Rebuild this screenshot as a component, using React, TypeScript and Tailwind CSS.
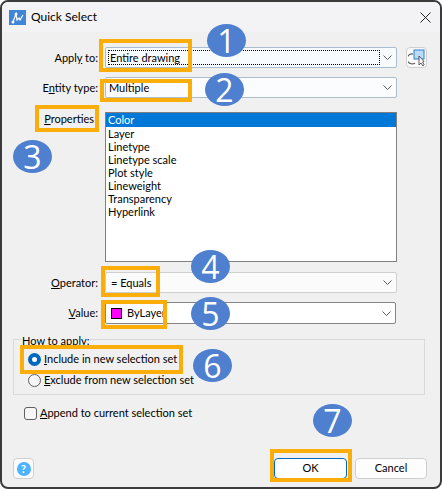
import React from "react";

const Chevron = () => (
  <svg width="9" height="5" viewBox="0 0 9 5" className="shrink-0" fill="none">
    <path d="M0.5 0.5 L4.5 4.5 L8.5 0.5" stroke="#5c5c5c" strokeWidth="1" />
  </svg>
);

const U = ({ children }: { children: React.ReactNode }) => <span className="underline underline-offset-1">{children}</span>;

const Badge = ({ n, cls }: { n: number; cls: string }) => (
  <div className={`absolute w-[39px] h-[33px] rounded-[50%] bg-[#4f7fcf] text-white flex items-center justify-center text-[32px] leading-none font-['Open_Sans',sans-serif] ${cls}`}>
    {n}
  </div>
);

const Mark = ({ cls }: { cls: string }) => <div className={`absolute border-4 border-[#fbae0a] ${cls}`} />;

const items = ["Layer", "Linetype", "Linetype scale", "Plot style", "Lineweight", "Transparency", "Hyperlink"];

export default function App() {
  return (
    <div className="relative w-[442px] h-[489px] bg-white overflow-hidden font-['Lato',sans-serif] text-[11px] text-black">
      <div className="h-full flex flex-col rounded-[8px] border-2 border-[#3b3b3b] bg-[#f0f0f0] overflow-hidden">
        <div className="h-[30px] shrink-0 bg-[#f3f3f6] flex items-center pl-[7px] pr-[9px]">
          <svg width="17" height="15" viewBox="0 0 17 15">
            <rect width="17" height="15" fill="#3f86d8" />
            <path d="M4 12 L7 4 L8 10 L10 8 L11 10 L14 5" fill="none" stroke="#fff" strokeWidth="1.2" />
            <circle cx="4" cy="12" r="1.5" fill="#fff" />
            <circle cx="7" cy="4" r="1.5" fill="#fff" />
          </svg>
          <span className="ml-[5px] text-[12px]">Quick Select</span>
          <svg width="11" height="11" viewBox="0 0 11 11" className="ml-auto">
            <path d="M0.5 0.5 L10.5 10.5 M10.5 0.5 L0.5 10.5" stroke="#222" strokeWidth="1" />
          </svg>
        </div>

        <div className="flex-1 flex flex-col pt-[15px] pl-[11px] pr-[13px] pb-[8px]">
          <div className="flex items-center h-[21px]">
            <div className="w-[85px] text-right shrink-0 pt-px">Appl<U>y</U> to:</div>
            <div className="ml-[7px] w-[292px] h-full rounded-[2px] border border-[#a9bdd2] bg-[#f8fbfe] flex items-center pl-[2px] pr-[3px]">
              <div className="h-[15px] w-[272px] border border-dotted border-black flex items-center pl-[1px] pt-px">Entire drawing</div>
              <div className="ml-auto mr-[1px] flex"><Chevron /></div>
            </div>
            <div className="ml-[9px] w-[21px] h-full rounded-[4px] border border-[#cfcfcf] bg-[#fbfbfb] flex items-center justify-center">
              <svg width="17" height="17" viewBox="0 0 17 17" fill="none">
                <rect x="6" y="1" width="10" height="9" fill="#b9dcfb" stroke="#2f7fd0" />
                <path d="M7 14 A5 5 0 1 1 5 5" stroke="#555" strokeWidth="1.1" />
                <path d="M11 7 L11 16 L13 14 L15 17 L16 15.5 L14.5 13 L16 12.5 Z" fill="#fff" stroke="#333" strokeWidth="0.8" />
              </svg>
            </div>
          </div>

          <div className="flex items-center h-[21px] mt-[9px]">
            <div className="w-[85px] text-right shrink-0 pt-px">E<U>n</U>tity type:</div>
            <div className="ml-[7px] w-[292px] h-full rounded-[2px] border border-[#abbccc] bg-[#fbfcfe] flex items-center pl-[3px] pr-[4px] justify-between">
              <span className="pt-px">Multiple</span>
              <Chevron />
            </div>
          </div>

          <div className="flex mt-[14px]">
            <div className="w-[81px] text-right shrink-0 leading-[14px]"><U>P</U>roperties</div>
            <div className="ml-[11px] w-[292px] h-[150px] border border-[#7f7f7f] bg-white leading-[13px]">
              <div className="h-[14px] bg-[#0078d7] text-white pl-[2px] leading-[14px]">Color</div>
              {items.map((t) => (
                <div key={t} className="pl-[2px]">{t}</div>
              ))}
            </div>
          </div>

          <div className="flex items-center h-[21px] mt-[10px]">
            <div className="w-[85px] text-right shrink-0 pt-px"><U>O</U>perator:</div>
            <div className="ml-[7px] w-[292px] h-full rounded-[2px] border border-[#cfcfcf] bg-[#fbfbfb] flex items-center pl-[5px] pr-[4px] justify-between">
              <span className="pt-px">= Equals</span>
              <Chevron />
            </div>
          </div>

          <div className="flex items-center h-[22px] mt-[9px]">
            <div className="w-[85px] text-right shrink-0"><U>V</U>alue:</div>
            <div className="ml-[7px] w-[291px] h-full rounded-[2px] border border-[#858585] bg-white flex items-center pl-[5px] pr-[4px]">
              <div className="w-[11px] h-[11px] bg-[#ff00ff] border border-black" />
              <span className="ml-[5px]">ByLayer</span>
              <div className="ml-auto flex"><Chevron /></div>
            </div>
          </div>

          <div className="mt-[15px] w-[412px] ml-0 h-[56px] border border-[#d9d9d9] pl-[7px]">
            <div className="w-fit -mt-[6px] bg-[#f0f0f0] px-px leading-[14px]">How to apply:</div>
            <div className="flex items-center mt-[3px] ml-[7px] h-[17px]">
              <div className="w-[13px] h-[13px] rounded-full border-4 border-[#0067c0] bg-white shrink-0" />
              <span className="ml-[3px]"><U>I</U>nclude in new selection set</span>
            </div>
            <div className="flex items-center mt-[5px] ml-[7px] h-[15px]">
              <div className="w-[13px] h-[13px] rounded-full border border-[#5f5f5f] bg-[#f6f6f6] shrink-0" />
              <span className="ml-[3px]"><U>E</U>xclude from new selection set</span>
            </div>
          </div>

          <div className="flex items-center mt-[11px] ml-[11px] h-[15px]">
            <div className="w-[13px] h-[13px] rounded-[3px] border border-[#5f5f5f] bg-[#f6f6f6] shrink-0" />
            <span className="ml-[3px]"><U>A</U>ppend to current selection set</span>
          </div>

          <div className="mt-auto flex items-center h-[21px]">
            <div className="w-[21px] h-[21px] rounded-[4px] border border-[#cfcfcf] bg-[#fbfbfb] flex items-center justify-center">
              <div className="w-[14px] h-[14px] rounded-full bg-[#4db2ff] text-white text-[11px] font-bold leading-none flex items-center justify-center">?</div>
            </div>
            <div className="ml-auto w-[73px] h-[21px] rounded-[4px] border border-[#0067c0] bg-white flex items-center justify-center">OK</div>
            <div className="ml-[8px] w-[72px] h-[21px] rounded-[4px] border border-[#cfcfcf] bg-[#fdfdfd] flex items-center justify-center">Cancel</div>
          </div>
        </div>
      </div>

      <Mark cls="left-[99px] top-[39px] w-[93px] h-[33px]" />
      <Mark cls="left-[100px] top-[79px] w-[92px] h-[23px]" />
      <Mark cls="left-[35px] top-[105px] w-[64px] h-[27px]" />
      <Mark cls="left-[101px] top-[266px] w-[59px] h-[31px]" />
      <Mark cls="left-[101px] top-[300px] w-[66px] h-[29px]" />
      <Mark cls="left-[20px] top-[345px] w-[163px] h-[29px]" />
      <Mark cls="left-[270px] top-[449px] w-[82px] h-[33px]" />

      <Badge n={1} cls="left-[207px] top-[24px]" />
      <Badge n={2} cls="left-[205px] top-[73px]" />
      <Badge n={3} cls="left-[13px] top-[140px]" />
      <Badge n={4} cls="left-[191px] top-[250px]" />
      <Badge n={5} cls="left-[191px] top-[297px]" />
      <Badge n={6} cls="left-[193px] top-[349px]" />
      <Badge n={7} cls="left-[313px] top-[404px]" />
    </div>
  );
}
